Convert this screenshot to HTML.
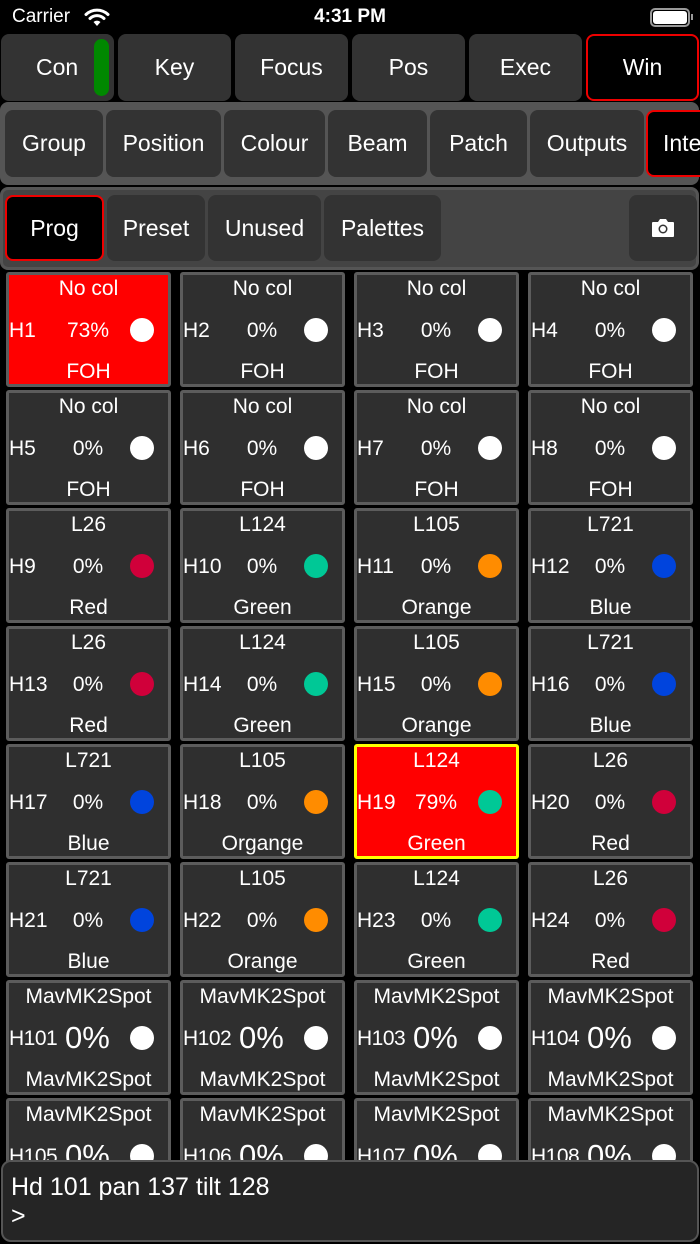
<!DOCTYPE html><html><head><style>
*{margin:0;padding:0;box-sizing:border-box}
body{width:700px;height:1244px;background:#000;font-family:"Liberation Sans",sans-serif;color:#fff;position:relative;overflow:hidden}
.a{position:absolute}
.btn{position:absolute;background:#333;border-radius:8px;font-size:23px;display:flex;align-items:center;justify-content:center}
.sel{background:#000;border:2px solid #e00}
.t{position:absolute;width:165px;height:115px;background:#2f2f2f;border:3px solid #5c5c5c;border-radius:3px;font-size:21px}
.t.r{background:#f00}
.t.y{border-color:#ff0}
.t .u{position:absolute;left:0;right:0;top:2px;text-align:center}
.t .b{position:absolute;left:0;right:0;top:85px;text-align:center}
.t .h{position:absolute;left:0;top:44px}
.t .p{position:absolute;left:0;width:158px;text-align:center;top:44px}
.t .d{position:absolute;left:121px;top:43px;width:24px;height:24px;border-radius:50%;background:#fff}
.t .h2{position:absolute;left:0;top:44px;font-size:21px;letter-spacing:-.5px}
.t .p2{position:absolute;left:56px;top:37px;font-size:31px}
</style></head><body>
<div class="a" style="left:12px;top:6px;font-size:19px">Carrier</div>
<svg class="a" style="left:84px;top:7px" width="26" height="20" viewBox="0 0 26 20"><path d="M2 7.5a16 16 0 0 1 22 0" stroke="#fff" stroke-width="3" fill="none" stroke-linecap="round"/><path d="M6 11.5a10 10 0 0 1 14 0" stroke="#fff" stroke-width="3" fill="none" stroke-linecap="round"/><path d="M13 19l-3.5-4a5 5 0 0 1 7 0z" fill="#fff"/></svg>
<div class="a" style="left:0;width:700px;top:6px;text-align:center;font-size:19px;font-weight:bold">4:31 PM</div>
<div class="a" style="left:650px;top:8px;width:40px;height:19px;border:2px solid #999;border-radius:5px"></div>
<div class="a" style="left:653px;top:11px;width:34px;height:13px;background:#fff;border-radius:3px"></div>
<div class="a" style="left:691px;top:14px;width:2px;height:6px;background:#999"></div>

<div class="btn" style="left:1px;top:34px;width:113px;height:67px;justify-content:flex-start;padding-left:35px">Con</div>
<div class="a" style="left:94px;top:39px;width:15px;height:57px;background:#080;border-radius:8px"></div>
<div class="btn" style="left:118px;top:34px;width:113px;height:67px">Key</div>
<div class="btn" style="left:235px;top:34px;width:113px;height:67px">Focus</div>
<div class="btn" style="left:352px;top:34px;width:113px;height:67px">Pos</div>
<div class="btn" style="left:469px;top:34px;width:113px;height:67px">Exec</div>
<div class="btn sel" style="left:586px;top:34px;width:113px;height:67px">Win</div>

<div class="a" style="left:0;top:102px;width:699px;height:83px;background:#555;border-radius:8px"></div>
<div class="btn" style="left:5px;top:110px;width:98px;height:67px">Group</div>
<div class="btn" style="left:106px;top:110px;width:115px;height:67px">Position</div>
<div class="btn" style="left:224px;top:110px;width:101px;height:67px">Colour</div>
<div class="btn" style="left:328px;top:110px;width:99px;height:67px">Beam</div>
<div class="btn" style="left:430px;top:110px;width:97px;height:67px">Patch</div>
<div class="btn" style="left:530px;top:110px;width:114px;height:67px">Outputs</div>
<div class="btn sel" style="left:646px;top:110px;width:70px;height:67px;justify-content:flex-start;padding-left:15px;border-radius:8px 0 0 8px;border-right:none">Inte</div>

<div class="a" style="left:0;top:187px;width:699px;height:83px;background:#444;border:3px solid #555;border-radius:8px"></div>
<div class="btn sel" style="left:5px;top:195px;width:99px;height:66px">Prog</div>
<div class="btn" style="left:107px;top:195px;width:98px;height:66px">Preset</div>
<div class="btn" style="left:208px;top:195px;width:113px;height:66px">Unused</div>
<div class="btn" style="left:324px;top:195px;width:117px;height:66px">Palettes</div>
<div class="btn" style="left:629px;top:195px;width:68px;height:66px"><svg width="24" height="20" viewBox="0 0 24 20"><path d="M2 4h5l2-3h6l2 3h5a1 1 0 0 1 1 1v13a1 1 0 0 1-1 1H2a1 1 0 0 1-1-1V5a1 1 0 0 1 1-1z" fill="#fff"/><circle cx="12" cy="11" r="4.5" fill="#333"/><circle cx="12" cy="11" r="3" fill="#fff"/></svg></div>

<div class="t r" style="left:6px;top:272px"><div class="u">No col</div><div class="h">H1</div><div class="p">73%</div><div class="d"></div><div class="b">FOH</div></div>
<div class="t" style="left:180px;top:272px"><div class="u">No col</div><div class="h">H2</div><div class="p">0%</div><div class="d"></div><div class="b">FOH</div></div>
<div class="t" style="left:354px;top:272px"><div class="u">No col</div><div class="h">H3</div><div class="p">0%</div><div class="d"></div><div class="b">FOH</div></div>
<div class="t" style="left:528px;top:272px"><div class="u">No col</div><div class="h">H4</div><div class="p">0%</div><div class="d"></div><div class="b">FOH</div></div>
<div class="t" style="left:6px;top:390px"><div class="u">No col</div><div class="h">H5</div><div class="p">0%</div><div class="d"></div><div class="b">FOH</div></div>
<div class="t" style="left:180px;top:390px"><div class="u">No col</div><div class="h">H6</div><div class="p">0%</div><div class="d"></div><div class="b">FOH</div></div>
<div class="t" style="left:354px;top:390px"><div class="u">No col</div><div class="h">H7</div><div class="p">0%</div><div class="d"></div><div class="b">FOH</div></div>
<div class="t" style="left:528px;top:390px"><div class="u">No col</div><div class="h">H8</div><div class="p">0%</div><div class="d"></div><div class="b">FOH</div></div>
<div class="t" style="left:6px;top:508px"><div class="u">L26</div><div class="h">H9</div><div class="p">0%</div><div class="d" style="background:#d0003a"></div><div class="b">Red</div></div>
<div class="t" style="left:180px;top:508px"><div class="u">L124</div><div class="h">H10</div><div class="p">0%</div><div class="d" style="background:#00c896"></div><div class="b">Green</div></div>
<div class="t" style="left:354px;top:508px"><div class="u">L105</div><div class="h">H11</div><div class="p">0%</div><div class="d" style="background:#ff8c00"></div><div class="b">Orange</div></div>
<div class="t" style="left:528px;top:508px"><div class="u">L721</div><div class="h">H12</div><div class="p">0%</div><div class="d" style="background:#0044dd"></div><div class="b">Blue</div></div>
<div class="t" style="left:6px;top:626px"><div class="u">L26</div><div class="h">H13</div><div class="p">0%</div><div class="d" style="background:#d0003a"></div><div class="b">Red</div></div>
<div class="t" style="left:180px;top:626px"><div class="u">L124</div><div class="h">H14</div><div class="p">0%</div><div class="d" style="background:#00c896"></div><div class="b">Green</div></div>
<div class="t" style="left:354px;top:626px"><div class="u">L105</div><div class="h">H15</div><div class="p">0%</div><div class="d" style="background:#ff8c00"></div><div class="b">Orange</div></div>
<div class="t" style="left:528px;top:626px"><div class="u">L721</div><div class="h">H16</div><div class="p">0%</div><div class="d" style="background:#0044dd"></div><div class="b">Blue</div></div>
<div class="t" style="left:6px;top:744px"><div class="u">L721</div><div class="h">H17</div><div class="p">0%</div><div class="d" style="background:#0044dd"></div><div class="b">Blue</div></div>
<div class="t" style="left:180px;top:744px"><div class="u">L105</div><div class="h">H18</div><div class="p">0%</div><div class="d" style="background:#ff8c00"></div><div class="b">Organge</div></div>
<div class="t r y" style="left:354px;top:744px"><div class="u">L124</div><div class="h">H19</div><div class="p">79%</div><div class="d" style="background:#00c896"></div><div class="b">Green</div></div>
<div class="t" style="left:528px;top:744px"><div class="u">L26</div><div class="h">H20</div><div class="p">0%</div><div class="d" style="background:#d0003a"></div><div class="b">Red</div></div>
<div class="t" style="left:6px;top:862px"><div class="u">L721</div><div class="h">H21</div><div class="p">0%</div><div class="d" style="background:#0044dd"></div><div class="b">Blue</div></div>
<div class="t" style="left:180px;top:862px"><div class="u">L105</div><div class="h">H22</div><div class="p">0%</div><div class="d" style="background:#ff8c00"></div><div class="b">Orange</div></div>
<div class="t" style="left:354px;top:862px"><div class="u">L124</div><div class="h">H23</div><div class="p">0%</div><div class="d" style="background:#00c896"></div><div class="b">Green</div></div>
<div class="t" style="left:528px;top:862px"><div class="u">L26</div><div class="h">H24</div><div class="p">0%</div><div class="d" style="background:#d0003a"></div><div class="b">Red</div></div>
<div class="t" style="left:6px;top:980px"><div class="u">MavMK2Spot</div><div class="h2">H101</div><div class="p2">0%</div><div class="d"></div><div class="b">MavMK2Spot</div></div>
<div class="t" style="left:180px;top:980px"><div class="u">MavMK2Spot</div><div class="h2">H102</div><div class="p2">0%</div><div class="d"></div><div class="b">MavMK2Spot</div></div>
<div class="t" style="left:354px;top:980px"><div class="u">MavMK2Spot</div><div class="h2">H103</div><div class="p2">0%</div><div class="d"></div><div class="b">MavMK2Spot</div></div>
<div class="t" style="left:528px;top:980px"><div class="u">MavMK2Spot</div><div class="h2">H104</div><div class="p2">0%</div><div class="d"></div><div class="b">MavMK2Spot</div></div>
<div class="t" style="left:6px;top:1098px"><div class="u">MavMK2Spot</div><div class="h2">H105</div><div class="p2">0%</div><div class="d"></div><div class="b">MavMK2Spot</div></div>
<div class="t" style="left:180px;top:1098px"><div class="u">MavMK2Spot</div><div class="h2">H106</div><div class="p2">0%</div><div class="d"></div><div class="b">MavMK2Spot</div></div>
<div class="t" style="left:354px;top:1098px"><div class="u">MavMK2Spot</div><div class="h2">H107</div><div class="p2">0%</div><div class="d"></div><div class="b">MavMK2Spot</div></div>
<div class="t" style="left:528px;top:1098px"><div class="u">MavMK2Spot</div><div class="h2">H108</div><div class="p2">0%</div><div class="d"></div><div class="b">MavMK2Spot</div></div>

<div class="a" style="left:1px;top:1160px;width:698px;height:82px;background:#252525;border:2px solid #555;border-radius:10px;padding:11px 0 0 8px;font-size:25px;line-height:29px">Hd 101 pan 137 tilt 128<br>&gt;</div>
</body></html>
